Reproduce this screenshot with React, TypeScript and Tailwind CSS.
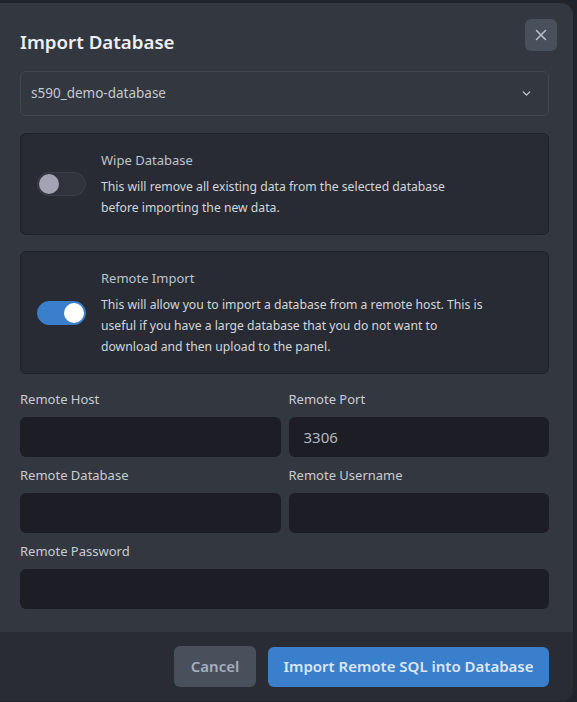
import { X, ChevronDown } from "lucide-react"

const font = { fontFamily: '"Noto Sans", "Open Sans", sans-serif' }

function Toggle({ on }: { on: boolean }) {
	return (
		<div
			className={`flex h-6 w-[49px] shrink-0 items-center rounded-full border px-[1px] ${
				on ? "justify-end border-[#3a7fcc] bg-[#3a7fcc]" : "justify-start border-[#3c3f48] bg-[#30333b]"
			}`}
		>
			<div className={`h-[20px] w-[20px] rounded-full ${on ? "bg-white" : "bg-[#a4a3b6]"}`} />
		</div>
	)
}

function OptionCard({ title, lines, on }: { title: string; lines: string[]; on: boolean }) {
	return (
		<div className="flex items-center gap-[15px] rounded-md border border-[#1f2228] bg-[#282b33] py-[16px] pl-4 pr-5">
			<Toggle on={on} />
			<div>
				<div className="text-[13px] leading-5 text-[#bfc3ca]">{title}</div>
				<p className="mt-[6px] text-[12.2px] leading-[21px] text-[#d3d6db]">
					{lines.map((line, i) => (
						<span key={i} className="block">
							{line}
						</span>
					))}
				</p>
			</div>
		</div>
	)
}

function Field({ label, value }: { label: string; value?: string }) {
	return (
		<div className="flex flex-col">
			<label className="mb-2 text-[13px] leading-5 text-[#c9ccd2]">{label}</label>
			<div className="flex h-10 items-center rounded-md bg-[#1d1e25] px-[15px] text-[15px] text-[#b4b8c0]">
				{value}
			</div>
		</div>
	)
}

export default function App() {
	return (
		<div className="h-[702px] overflow-hidden bg-[#21252b] pr-[4px] pt-[3px]" style={font}>
			<div className="flex h-[698px] flex-col overflow-hidden rounded-r-xl bg-[#33373f]">
				{/* Body */}
				<div className="flex-1 px-5 pt-4">
					<div className="flex items-start justify-between">
						<h2 className="mt-[9px] text-[18.7px] font-semibold leading-7 text-[#eceef1]">Import Database</h2>
						<button className="mr-[-4px] flex h-8 w-8 items-center justify-center rounded-md bg-[#48505c] text-[#bcc3ce]">
							<X size={18} strokeWidth={2} />
						</button>
					</div>

					<div className="mt-[15px] flex h-[45px] w-[529px] items-center justify-between rounded-md border border-[#434751] px-[10px] text-[13.5px] text-[#c5c8ce]">
						<span>s590_demo-database</span>
						<ChevronDown size={13} strokeWidth={2.5} className="mr-[5px] text-[#c5c8ce]" />
					</div>

					<div className="mt-[17px] flex w-[529px] flex-col gap-4">
						<OptionCard
							on={false}
							title="Wipe Database"
							lines={["This will remove all existing data from the selected database", "before importing the new data."]}
						/>
						<OptionCard
							on={true}
							title="Remote Import"
							lines={[
								"This will allow you to import a database from a remote host. This is",
								"useful if you have a large database that you do not want to",
								"download and then upload to the panel.",
							]}
						/>
					</div>

					<div className="mt-[15px] grid w-[529px] grid-cols-2 gap-x-2 gap-y-2">
						<Field label="Remote Host" />
						<Field label="Remote Port" value="3306" />
						<Field label="Remote Database" />
						<Field label="Remote Username" />
						<div className="col-span-2">
							<Field label="Remote Password" />
						</div>
					</div>
				</div>

				{/* Footer */}
				<div className="flex h-[69px] items-center justify-end gap-3 bg-[#292c34] pr-6">
					<button className="h-[41px] w-[82px] rounded-md bg-[#48505c] text-[15px] font-semibold text-[#a6afbc]">
						Cancel
					</button>
					<button className="h-10 w-[281px] rounded-md bg-[#3a7fcc] text-[15px] font-semibold text-[#dce6f3]">
						Import Remote SQL into Database
					</button>
				</div>
			</div>
		</div>
	)
}
